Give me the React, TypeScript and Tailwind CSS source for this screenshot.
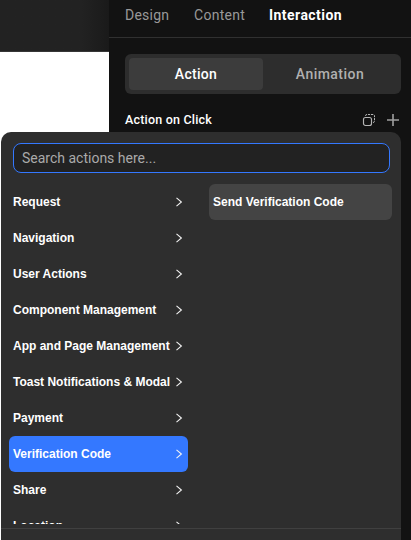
import React from "react";

const actions = [
  { name: "Request" },
  { name: "Navigation" },
  { name: "User Actions" },
  { name: "Component Management" },
  { name: "App and Page Management" },
  { name: "Toast Notifications & Modal" },
  { name: "Payment" },
  { name: "Verification Code", active: true },
  { name: "Share" },
  { name: "Location" },
];

function Chevron() {
  return (
    <svg className="h-3 w-2 shrink-0" viewBox="0 0 8 12" fill="none" stroke="#f4f4f4" strokeWidth="1.1">
      <path d="M1.5 1.9 6.4 6 1.5 10.1" />
    </svg>
  );
}

function CopyIcon() {
  return (
    <svg className="h-[14px] w-[14px]" viewBox="0 0 14 14" fill="none" stroke="#b5b5b5" strokeWidth="1">
      <rect x="1.5" y="4.5" width="8" height="8" rx="2" strokeWidth="1.15" />
      <path d="M3.5 3V2.8Q3.5 1.5 5 1.5H11Q12.5 1.5 12.5 3V8Q12.5 9.5 11 9.5" strokeDasharray="2.2 0.9" />
    </svg>
  );
}

function PlusIcon() {
  return (
    <svg className="h-3 w-3" viewBox="0 0 12 12" fill="none" stroke="#a0a0a0" strokeWidth="1.6">
      <path d="M0 6H12M6 0V12" />
    </svg>
  );
}

function ActionMenu() {
  return (
    <div className="absolute top-[132px] left-px flex h-[408px] w-[400px] flex-col overflow-hidden rounded-t-[10px] bg-[#2e2e2e] font-['Liberation_Sans',sans-serif]">
      <div className="mx-3 mt-[11px] flex h-[30px] w-[377px] shrink-0 items-center rounded-lg border border-[#3478ff] bg-[#222222] px-2">
        <span className="font-['Roboto',sans-serif] text-[14px] leading-5 whitespace-nowrap text-[#aaaaaa]">Search actions here...</span>
      </div>
      <div className="mt-[11px] flex h-[340px] shrink-0 overflow-hidden">
        <div className="ml-2 w-[179px] shrink-0">
          {actions.map((action) => (
            <div
              key={action.name}
              className={`flex h-9 items-center justify-between rounded-md pr-[5px] pl-1 ${action.active ? "bg-[#3478ff]" : ""}`}
            >
              <span className="text-[12px] leading-4 font-bold whitespace-nowrap text-white">{action.name}</span>
              <Chevron />
            </div>
          ))}
        </div>
        <div className="ml-[21px] flex h-9 w-[183px] items-center rounded-md bg-[#444444] pl-1">
          <span className="text-[12px] leading-4 font-bold whitespace-nowrap text-white">Send Verification Code</span>
        </div>
      </div>
      <div className="mt-1 h-px shrink-0 bg-[#404040]" />
    </div>
  );
}

export default function App() {
  return (
    <div className="relative flex h-[540px] w-[411px] overflow-hidden bg-white font-['Roboto',sans-serif]">
      <div className="h-[52px] w-[109px] shrink-0 border-b border-[#363636] bg-linear-to-r from-[#222222] from-75% to-[#1a1a1a]" />
      <div className="flex h-full w-[302px] flex-col bg-[#121212]">
        <div className="flex h-[38px] shrink-0 border-b border-[#303030] pt-[5px] pl-4 text-[14px] leading-5 text-[#999999]">
          <span className="w-[69px] tracking-[0.25px]">Design</span>
          <span className="w-[75px] tracking-[0.3px]">Content</span>
          <span className="font-bold tracking-[0.45px] text-white">Interaction</span>
        </div>
        <div className="mt-4 ml-4 flex h-10 w-[276px] shrink-0 rounded-md bg-[#2d2d2d] p-1 text-[14px] leading-5 font-medium">
          <div className="flex w-[134px] items-center justify-center rounded bg-[#3c3c3c] text-white">
            <span className="tracking-[0.3px]">Action</span>
          </div>
          <div className="flex flex-1 items-center justify-center text-[#b0b0b0]">
            <span className="tracking-[0.45px]">Animation</span>
          </div>
        </div>
        <div className="mt-4 flex h-5 items-center pr-3 pl-4">
          <span className="flex-1 text-[12.5px] leading-5 font-medium tracking-[0.2px] text-white">Action on Click</span>
          <CopyIcon />
          <span className="ml-[11px]">
            <PlusIcon />
          </span>
        </div>
      </div>
      <ActionMenu />
    </div>
  );
}
